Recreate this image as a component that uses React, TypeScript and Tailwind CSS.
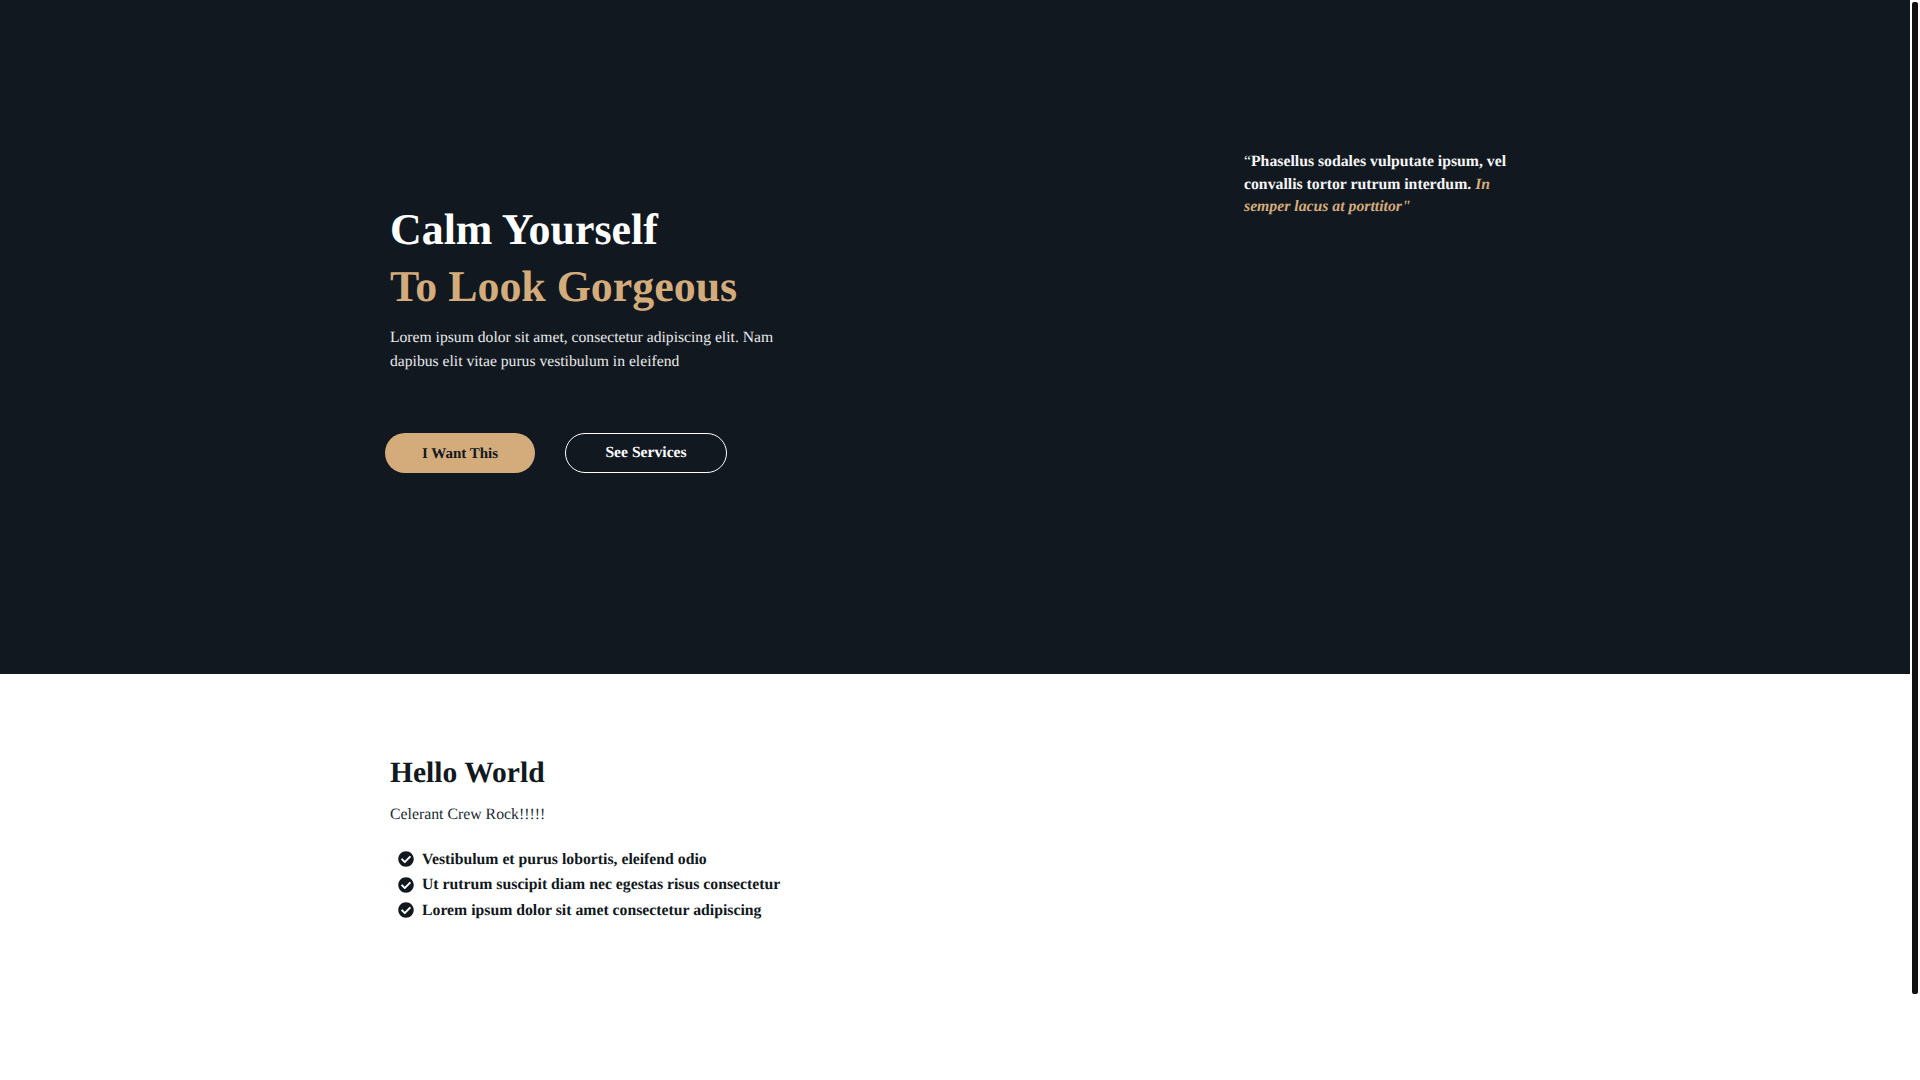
import { FaCheckCircle } from 'react-icons/fa';

const points = [
  'Vestibulum et purus lobortis, eleifend odio',
  'Ut rutrum suscipit diam nec egestas risus consectetur',
  'Lorem ipsum dolor sit amet consectetur adipiscing',
];

export default function App() {
  return (
    <div className="relative h-screen overflow-hidden bg-white pr-[10px] font-['Liberation_Serif',serif] text-[#111820] [text-rendering:geometricPrecision]">
      {/* Scrollbar thumb */}
      <div className="absolute right-[2px] top-[2px] h-[992px] w-[6px] rounded-[2px] bg-[#111111]" />

      {/* Hero */}
      <section className="h-[674px] bg-[#111820]">
        <div className="mx-auto flex w-[1130px] pt-[151px]">
          <div className="w-[854px] pt-[50.5px]">
            <h1 className="text-[43.9px] font-bold leading-[57px] text-white">
              Calm Yourself
              <br />
              <span className="text-[#d4ab7b]">To Look Gorgeous</span>
            </h1>
            <p className="mt-[10.5px] w-[400px] text-[15.65px] leading-[24px] text-[#e8e8e8]">
              Lorem ipsum dolor sit amet, consectetur adipiscing elit. Nam dapibus elit vitae purus vestibulum in eleifend
            </p>
            <div className="-ml-[5px] mt-[59px] flex gap-[30px]">
              <a className="flex h-[40px] w-[150px] items-center justify-center rounded-full bg-[#d4ab7b] pt-[2px] text-[15px] font-bold text-[#111820]">
                I Want This
              </a>
              <a className="flex h-[40px] w-[162px] items-center justify-center rounded-full border border-white text-[15.65px] font-bold text-white">
                See Services
              </a>
            </div>
          </div>
          <blockquote className="w-[275px] text-[15.75px] font-bold leading-[22.5px] text-[#f5f5f5]">
            <span className="font-normal">“</span>Phasellus sodales vulputate ipsum, vel convallis tortor rutrum interdum.{' '}
            <em className="text-[#d4ab7b]">In semper lacus at porttitor"</em>
          </blockquote>
        </div>
      </section>

      {/* Intro */}
      <section>
        <div className="mx-auto w-[1130px] pt-[78.5px]">
          <h2 className="text-[29.55px] font-bold leading-[40px]">Hello World</h2>
          <p className="mt-[10.5px] text-[15.8px] leading-[24px] text-[#222a32]">Celerant Crew Rock!!!!!</p>
          <ul className="mt-[20px] flex flex-col pl-[8px]">
            {points.map((point) => (
              <li key={point} className="flex h-[25.5px] items-center gap-[8px] text-[15.75px] font-bold">
                <FaCheckCircle size={16} className="-mt-[1px]" />
                {point}
              </li>
            ))}
          </ul>
        </div>
      </section>
    </div>
  );
}
